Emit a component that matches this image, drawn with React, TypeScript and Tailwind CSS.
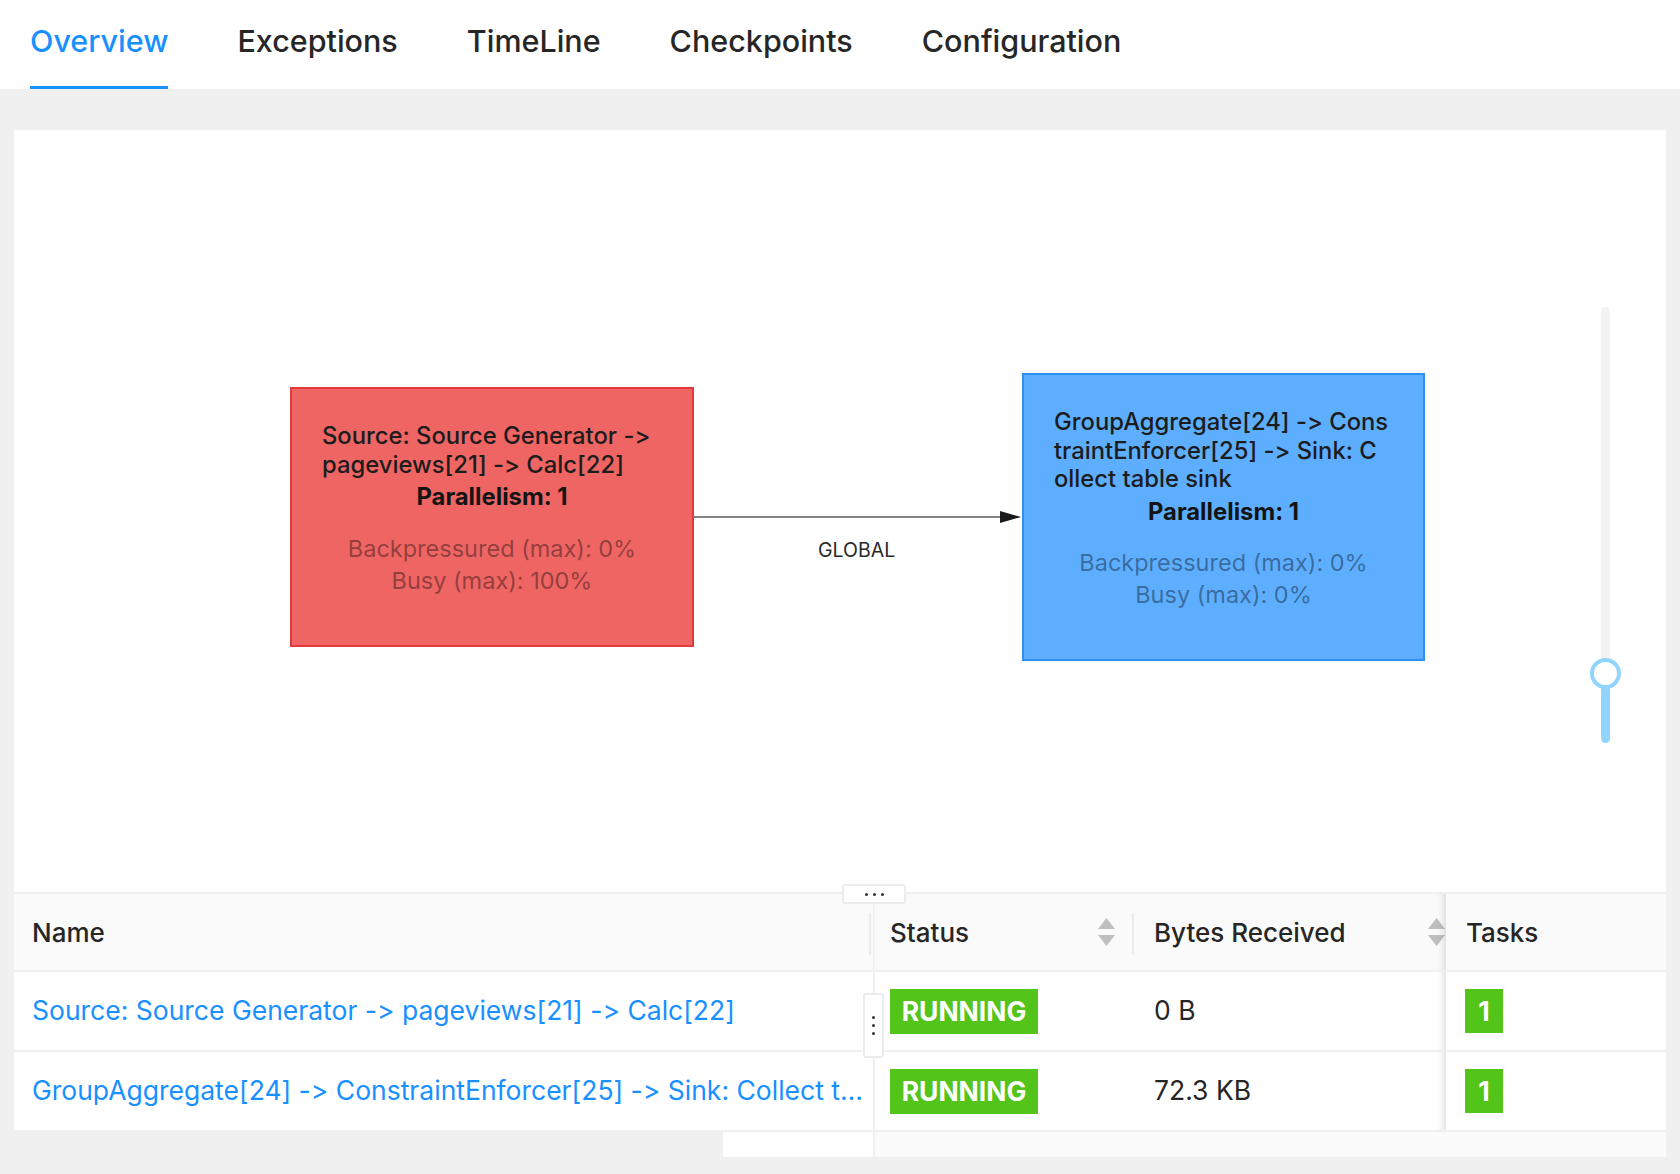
import React from "react";

const tabs = ["Overview", "Exceptions", "TimeLine", "Checkpoints", "Configuration"];

function SortIcon() {
  return (
    <svg width="17" height="28" viewBox="0 0 17 28" className="shrink-0">
      <path d="M8.5 0 L17 11 L0 11 Z" fill="#bfbfbf" />
      <path d="M0 17 L17 17 L8.5 28 Z" fill="#bfbfbf" />
    </svg>
  );
}

function GraphNode({
  lines,
  className,
  busy,
}: {
  lines: string[];
  className: string;
  busy: string;
}) {
  return (
    <div className={`absolute flex flex-col pt-[33px] ${className}`}>
      <div className="px-[30px] text-[23.8px] leading-[28.5px] font-medium text-[#1c1c1c]">
        {lines.map((l) => (
          <div key={l} className="whitespace-nowrap">
            {l}
          </div>
        ))}
      </div>
      <div className="mt-[4px] text-center text-[23.8px] leading-[28.5px] font-bold text-[#141414]">
        Parallelism: 1
      </div>
      <div className="mt-[21px] text-center text-[23.5px] leading-[32px] text-black/40">
        <div>Backpressured (max): 0%</div>
        <div>Busy (max): {busy}</div>
      </div>
    </div>
  );
}

function Tag({ children, className }: { children: React.ReactNode; className: string }) {
  return (
    <span
      className={`inline-flex items-center justify-center bg-[#52c41a] text-white font-bold text-[26.5px] leading-none ${className}`}
    >
      {children}
    </span>
  );
}

function FixedShadow() {
  return (
    <div className="pointer-events-none absolute top-0 bottom-0 left-[-30px] w-[30px] shadow-[inset_-10px_0_8px_-8px_rgba(0,0,0,0.15)]" />
  );
}

const rows = [
  {
    name: "Source: Source Generator -> pageviews[21] -> Calc[22]",
    bytes: "0 B",
  },
  {
    name: "GroupAggregate[24] -> ConstraintEnforcer[25] -> Sink: Collect table sink",
    bytes: "72.3 KB",
  },
];

export default function App() {
  return (
    <div className="w-[1680px] h-[1174px] overflow-hidden bg-[#f0f0f0] font-['Inter','Noto_Sans',sans-serif] text-[#262626] [font-feature-settings:'calt'_0,'liga'_0]">
      <nav className="h-[89px] bg-white flex pl-[30px] gap-[69px]">
        {tabs.map((t, i) => (
          <div
            key={t}
            className={`relative pt-[23px] text-[30.5px] leading-[36px] font-medium ${
              i === 0 ? "text-[#1890ff]" : "text-[#262626]"
            }`}
          >
            {t}
            {i === 0 && <div className="absolute left-0 right-0 bottom-0 h-[3px] bg-[#1890ff]" />}
          </div>
        ))}
      </nav>

      <div className="pt-[41px] px-[14px]">
        <div className="bg-white">
          {/* graph canvas */}
          <div className="relative h-[764px] border-b-2 border-[#f0f0f0]">
            <svg className="absolute left-0 top-0" width="1652" height="762">
              <line x1="680" y1="387" x2="990" y2="387" stroke="#5a5a5a" strokeWidth="1.6" />
              <path d="M986 381 L1007 387 L986 393 Z" fill="#1a1a1a" />
            </svg>
            <div className="absolute left-[804px] top-[408px] text-[19.5px] leading-[24px] text-[#2a2a2a]">
              GLOBAL
            </div>

            <GraphNode
              className="left-[276px] top-[257px] w-[404px] h-[260px] bg-[#ee6563] border-2 border-[#e33b3b]"
              lines={["Source: Source Generator ->", "pageviews[21] -> Calc[22]"]}
              busy="100%"
            />
            <GraphNode
              className="left-[1008px] top-[243px] w-[403px] h-[288px] bg-[#5daeff] border-2 border-[#2d8ff2]"
              lines={["GroupAggregate[24] -> Cons", "traintEnforcer[25] -> Sink: C", "ollect table sink"]}
              busy="0%"
            />

            {/* zoom slider */}
            <div className="absolute left-[1587px] top-[177px] w-[9px] h-[436px] rounded-full bg-[#f2f2f2]">
              <div className="absolute left-0 right-0 bottom-0 h-[70px] rounded-full bg-[#91d5ff]" />
              <div className="absolute left-[-11px] top-[351px] w-[31px] h-[31px] rounded-full border-[4px] border-[#91d5ff] bg-white" />
            </div>

            {/* splitter handle */}
            <div className="absolute left-[828px] top-[754px] z-10 w-[64px] h-[20px] rounded-[3px] border-2 border-[#ececec] bg-white flex items-center justify-center gap-[5px]">
              <span className="w-[3px] h-[3px] rounded-full bg-[#333]" />
              <span className="w-[3px] h-[3px] rounded-full bg-[#333]" />
              <span className="w-[3px] h-[3px] rounded-full bg-[#333]" />
            </div>
          </div>

          {/* table */}
          <div className="relative">
            <div className="grid grid-cols-[859px_261px_312px_220px]">
              {/* header */}
              <div className="relative h-[78px] bg-[#fafafa] border-b-2 border-[#f0f0f0] flex items-center pl-[18px] text-[26px] font-medium">
                Name
                <div className="absolute right-[2px] top-[19px] h-[42px] w-[2px] bg-[#ececec]" />
              </div>
              <div className="relative h-[78px] bg-[#fafafa] border-b-2 border-l-2 border-[#f0f0f0] flex items-center justify-between pl-[15px] pr-[19px] text-[26px] font-medium">
                Status
                <SortIcon />
                <div className="absolute right-0 top-[19px] h-[42px] w-[2px] bg-[#ececec]" />
              </div>
              <div className="relative h-[78px] bg-[#fafafa] border-b-2 border-[#f0f0f0] flex items-center justify-between pl-[20px] pr-[1px] text-[26px] font-medium">
                Bytes Received
                <SortIcon />
              </div>
              <div className="relative h-[78px] bg-[#fafafa] border-b-2 border-[#f0f0f0] flex items-center pl-[20px] text-[26px] font-medium">
                <FixedShadow />
                Tasks
              </div>

              {rows.map((r) => (
                <React.Fragment key={r.name}>
                  <div className="h-[80px] border-b-2 border-[#f0f0f0] flex items-center pl-[18px] pr-[3px] text-[26.5px] text-[#1890ff] min-w-0">
                    <span className="truncate">{r.name}</span>
                  </div>
                  <div className="h-[80px] border-b-2 border-l-2 border-[#f0f0f0] flex items-center pl-[15px]">
                    <Tag className="w-[148px] h-[45px]">RUNNING</Tag>
                  </div>
                  <div className="h-[80px] border-b-2 border-[#f0f0f0] flex items-center pl-[20px] text-[26.5px]">
                    {r.bytes}
                  </div>
                  <div className="relative h-[80px] border-b-2 border-[#f0f0f0] flex items-center pl-[19px]">
                    <FixedShadow />
                    <Tag className="w-[38px] h-[44px]">1</Tag>
                  </div>
                </React.Fragment>
              ))}
            </div>

            {/* horizontal scrollbar */}
            <div className="flex h-[25px]">
              <div className="w-[709px] bg-[#f0f0f0]" />
              <div className="w-[150px] bg-white" />
              <div className="flex-1 bg-[#fbfbfb] border-l-2 border-[#f0f0f0]" />
            </div>

            {/* vertical splitter handle */}
            <div className="absolute left-[849px] top-[99px] w-[21px] h-[65px] rounded-[3px] border-2 border-[#ececec] bg-white flex flex-col items-center justify-center gap-[5px]">
              <span className="w-[3px] h-[3px] rounded-full bg-[#333]" />
              <span className="w-[3px] h-[3px] rounded-full bg-[#333]" />
              <span className="w-[3px] h-[3px] rounded-full bg-[#333]" />
            </div>
          </div>
        </div>
      </div>
    </div>
  );
}
